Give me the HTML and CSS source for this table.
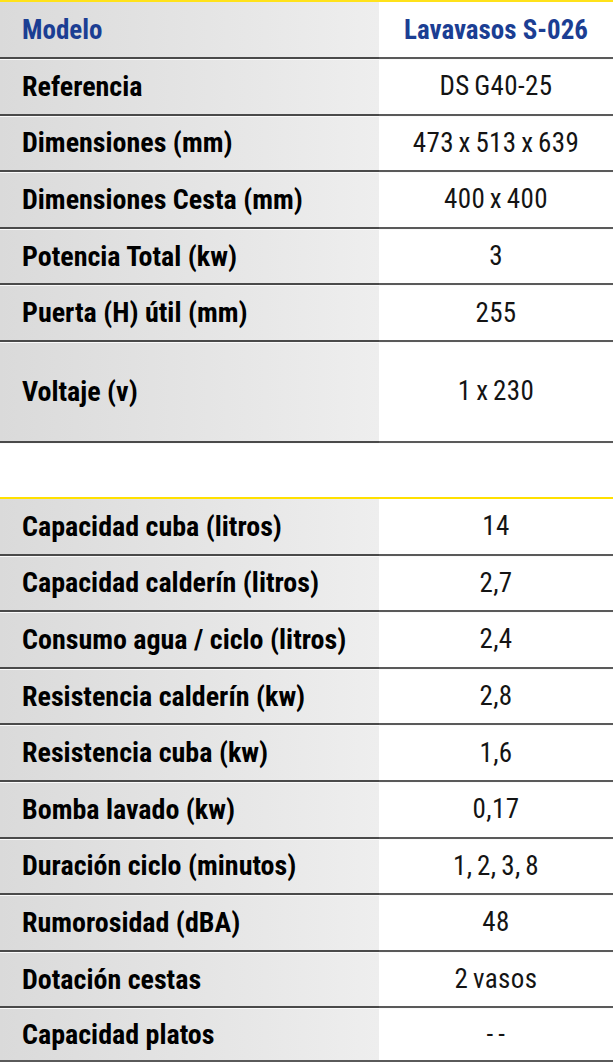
FILE: index.html
```html
<!DOCTYPE html>
<html lang="es">
<head>
<meta charset="utf-8">
<title>Lavavasos S-026</title>
<link rel="stylesheet" href="styles.css">
</head>
<body>
<div class="spec">
  <div class="row head"><div class="k">Modelo</div><div class="v">Lavavasos S-026</div></div>
  <div class="row"><div class="k">Referencia</div><div class="v">DS G40-25</div></div>
  <div class="row"><div class="k">Dimensiones (mm)</div><div class="v">473 x 513 x 639</div></div>
  <div class="row"><div class="k">Dimensiones Cesta (mm)</div><div class="v">400 x 400</div></div>
  <div class="row"><div class="k">Potencia Total (kw)</div><div class="v">3</div></div>
  <div class="row"><div class="k">Puerta (H) útil (mm)</div><div class="v">255</div></div>
  <div class="row tall"><div class="k">Voltaje (v)</div><div class="v">1 x 230</div></div>
  <div class="row gap"><div class="k"></div><div class="v"></div></div>
  <div class="row yellow"><div class="k">Capacidad cuba (litros)</div><div class="v">14</div></div>
  <div class="row"><div class="k">Capacidad calderín (litros)</div><div class="v">2,7</div></div>
  <div class="row"><div class="k">Consumo agua / ciclo (litros)</div><div class="v">2,4</div></div>
  <div class="row"><div class="k">Resistencia calderín (kw)</div><div class="v">2,8</div></div>
  <div class="row"><div class="k">Resistencia cuba (kw)</div><div class="v">1,6</div></div>
  <div class="row"><div class="k">Bomba lavado (kw)</div><div class="v">0,17</div></div>
  <div class="row"><div class="k">Duración ciclo (minutos)</div><div class="v">1, 2, 3, 8</div></div>
  <div class="row"><div class="k">Rumorosidad (dBA)</div><div class="v">48</div></div>
  <div class="row"><div class="k">Dotación cestas</div><div class="v">2 vasos</div></div>
  <div class="row last"><div class="k">Capacidad platos</div><div class="v">- -</div></div>
</div>
</body>
</html>
```
FILE: styles.css
```css
html, body {
  margin: 0;
  padding: 0;
  background: #fff;
  overflow: hidden;
}
.spec {
  width: 613px;
  font-family: "Roboto Condensed", "DejaVu Sans Condensed", "Liberation Sans Narrow", Roboto, sans-serif;
  font-stretch: condensed;
  color: #000;
}
.row {
  display: grid;
  grid-template-columns: 379px 234px;
  height: 56.6px;
}
.k, .v {
  box-sizing: border-box;
  display: flex;
  align-items: center;
  border-top: 2px solid #4a4a4a;
  box-shadow: inset 0 1px 0 #fafafa;
}
.k {
  background: linear-gradient(to right, #dadada, #eeeeee);
  padding-left: 22px;
  font-weight: 700;
  font-size: 28px;
}
.v {
  justify-content: center;
  font-size: 27px;
  font-weight: 400;
  letter-spacing: 0.4px;
  word-spacing: -2px;
  color: #141414;
  border-top-color: #5a5a5a;
}
.head {
  height: 57px;
}
.head .k, .head .v {
  border-top: 2px solid #ffe21a;
  box-shadow: none;
  color: #1b3e93;
  font-weight: 700;
  font-size: 27px;
  letter-spacing: 0;
  word-spacing: 0;
}
.tall {
  height: 101px;
}
.gap {
  height: 56px;
}
.gap .k {
  background: #fff;
}
.yellow .k, .yellow .v {
  border-top: 2px solid #ffe000;
  box-shadow: none;
}
.last {
  height: 56px;
}
.last .k, .last .v {
  border-bottom: 2px solid #5a5a5a;
}
```
